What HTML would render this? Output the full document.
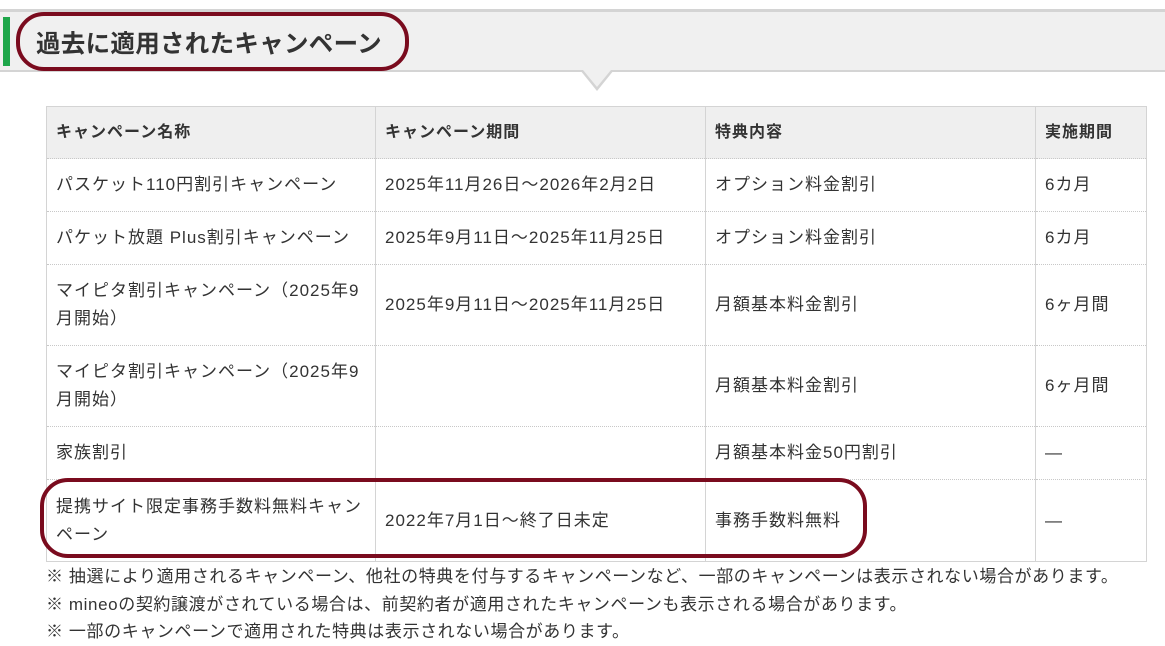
<!DOCTYPE html>
<html><head><meta charset="utf-8"><style>
*{margin:0;padding:0;box-sizing:border-box}
body{width:1165px;height:646px;background:#fff;font-family:"Liberation Sans","Noto Sans CJK JP",sans-serif;color:#333;position:relative;overflow:hidden}
.band{position:absolute;left:0;top:9px;width:1165px;height:63px;background:#f0f0f0;border-top:3px solid #d4d4d4;border-bottom:2px solid #d4d4d4}
.green{position:absolute;left:3px;top:17px;width:7px;height:49px;background:#1ea64a}
.title{position:absolute;left:36px;top:25px;font-size:24.5px;font-weight:bold;color:#333;letter-spacing:0.3px}
.tri{position:absolute;left:580px;top:70px;width:0;height:0;border-left:17px solid transparent;border-right:17px solid transparent;border-top:21px solid #d4d4d4}
.tri2{position:absolute;left:583px;top:70px;width:0;height:0;border-left:14px solid transparent;border-right:14px solid transparent;border-top:17px solid #f0f0f0}
.oval{position:absolute;border:4px solid #7a0b1e;border-radius:28px}
table{position:absolute;left:46px;top:106px;border-collapse:collapse;font-size:17px;letter-spacing:1px;table-layout:fixed;width:1100px}
td,th{border-left:1px solid #d4d4d4;border-right:1px solid #d4d4d4;border-top:1px dotted #c8c8c8;padding:0 9px;text-align:left;vertical-align:middle;line-height:28px;color:#333;font-weight:normal}
th{background:#efefef;font-weight:bold;font-size:16px;border-top:1px solid #d4d4d4;height:52px}
tr:last-child td{border-bottom:1px solid #d4d4d4}
.notes{position:absolute;left:46px;top:563px;font-size:17px;letter-spacing:0.6px;line-height:27.5px;color:#333;white-space:nowrap}
</style></head><body>
<div class="band"></div>
<div class="green"></div>
<div class="title">過去に適用されたキャンペーン</div>
<div class="tri"></div><div class="tri2"></div>
<table>
<colgroup><col style="width:329px"><col style="width:330px"><col style="width:330px"><col style="width:111px"></colgroup>
<tr><th>キャンペーン名称</th><th>キャンペーン期間</th><th>特典内容</th><th>実施期間</th></tr>
<tr style="height:53px"><td>パスケット110円割引キャンペーン</td><td>2025年11月26日～2026年2月2日</td><td>オプション料金割引</td><td>6カ月</td></tr>
<tr style="height:53px"><td>パケット放題 Plus割引キャンペーン</td><td>2025年9月11日～2025年11月25日</td><td>オプション料金割引</td><td>6カ月</td></tr>
<tr style="height:81px"><td>マイピタ割引キャンペーン（2025年9月開始）</td><td>2025年9月11日～2025年11月25日</td><td>月額基本料金割引</td><td>6ヶ月間</td></tr>
<tr style="height:81px"><td>マイピタ割引キャンペーン（2025年9月開始）</td><td></td><td>月額基本料金割引</td><td>6ヶ月間</td></tr>
<tr style="height:53px"><td>家族割引</td><td></td><td>月額基本料金50円割引</td><td>—</td></tr>
<tr style="height:82px"><td>提携サイト限定事務手数料無料キャンペーン</td><td>2022年7月1日～終了日未定</td><td>事務手数料無料</td><td>—</td></tr>
</table>
<div class="oval" style="left:16px;top:12px;width:393px;height:59px"></div>
<div class="oval" style="left:40px;top:478px;width:827px;height:80px"></div>
<div class="notes">※ 抽選により適用されるキャンペーン、他社の特典を付与するキャンペーンなど、一部のキャンペーンは表示されない場合があります。<br>※ mineoの契約譲渡がされている場合は、前契約者が適用されたキャンペーンも表示される場合があります。<br>※ 一部のキャンペーンで適用された特典は表示されない場合があります。</div>
</body></html>
